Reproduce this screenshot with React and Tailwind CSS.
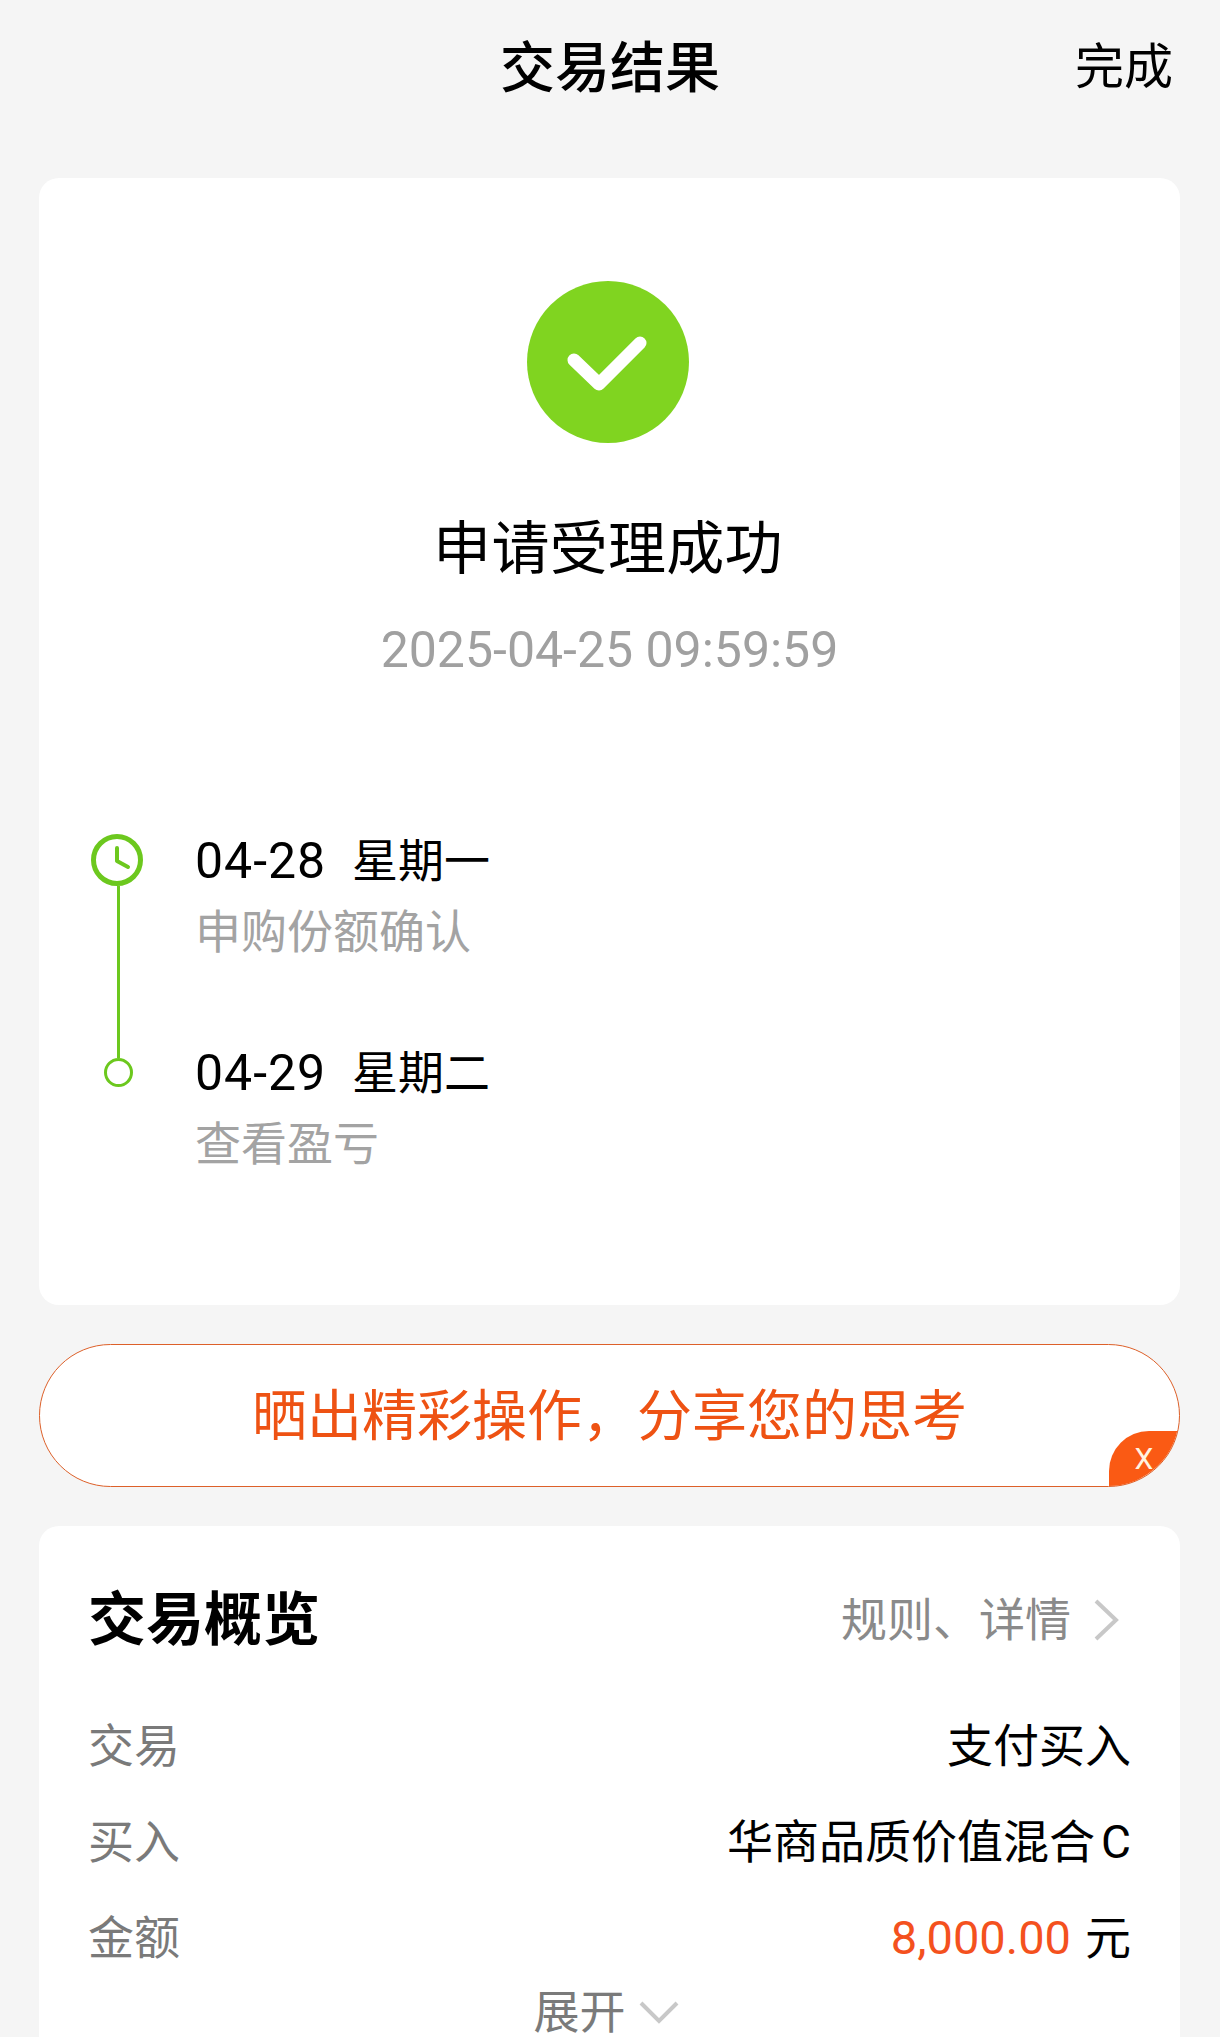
import React from "react";

const font = "font-['Roboto','Noto_Sans_CJK_SC',sans-serif]";

function Step({ date, day, note, icon, last }) {
  return (
    <div className={`flex ${last ? "" : "h-[212px]"}`}>
      <div className="w-[156px] shrink-0 flex flex-col items-center pl-[2px]">
        {icon}
        {!last && <div className="w-[3px] flex-1 -mb-[12px] bg-[#6cc81e]" />}
      </div>
      <div className="mt-[1px]">
        <div className="flex items-center h-[52px] text-[46px] leading-[52px] text-black">
          <span className="w-[157px] text-[50px] tracking-[1px]">{date}</span>
          <span>{day}</span>
        </div>
        <div className="mt-[19px] text-[46px] leading-[52px] text-[#a3a3a3]">{note}</div>
      </div>
    </div>
  );
}

function Row({ label, children }) {
  return (
    <div className="flex items-center justify-between h-[96px] text-[46px]">
      <span className="text-[#7a7a7a]">{label}</span>
      <span className="text-black">{children}</span>
    </div>
  );
}

export default function App() {
  return (
    <div className={`${font} h-[2037px] overflow-hidden bg-[#f5f5f5] pl-[39px] pr-[40px]`}>
      {/* header */}
      <div className="relative h-[178px]">
        <div className="pt-[34px] pl-[1px] text-center text-[55px] leading-[68px] font-medium text-black">交易结果</div>
        <div className="absolute right-[7px] top-[34px] text-[49px] leading-[68px] text-black">完成</div>
      </div>

      {/* result card */}
      <div className="h-[1127px] rounded-[20px] bg-white">
        <div className="flex flex-col items-center pt-[103px] pr-[3px]">
          <svg width="162" height="162" viewBox="0 0 162 162">
            <circle cx="81" cy="81" r="81" fill="#80d420" />
            <path d="M47 79 L72 103 L113 62" fill="none" stroke="#fff" strokeWidth="13" strokeLinecap="round" strokeLinejoin="round" />
          </svg>
          <div className="mt-[68px] text-[58px] tracking-[0.3px] leading-[76px] text-black">申请受理成功</div>
          <div className="mt-[35px] pl-[3px] text-[50px] leading-[56px] text-[#a0a0a0]">2025-04-25 09:59:59</div>
        </div>
        <div className="mt-[156px]">
          <Step
            date="04-28"
            day="星期一"
            note="申购份额确认"
            icon={
              <svg width="52" height="52" viewBox="0 0 52 52" className="shrink-0 -translate-x-[1px]">
                <circle cx="26" cy="26" r="23.5" fill="none" stroke="#6cc81e" strokeWidth="5" />
                <path d="M26 14 V27 L37 33" fill="none" stroke="#6cc81e" strokeWidth="4" strokeLinecap="round" strokeLinejoin="round" />
              </svg>
            }
          />
          <Step
            last
            date="04-29"
            day="星期二"
            note="查看盈亏"
            icon={<div className="mt-[12px] h-[29px] w-[29px] rounded-full border-[3px] border-[#6cc81e] bg-white" />}
          />
        </div>
      </div>

      {/* share banner */}
      <div className="relative mt-[39px] flex h-[143px] items-center justify-center overflow-hidden rounded-full border-[1.5px] border-[#dd6029] bg-white pt-[2px] text-[55px] text-[#ee5213]">
        晒出精彩操作，分享您的思考
        <div className="absolute bottom-0 right-0 flex h-[55px] w-[70px] items-center justify-center rounded-tl-[40px] bg-[#fa5a14] text-[30px] leading-none text-[#fff3e0]">
          X
        </div>
      </div>

      {/* overview card */}
      <div className="mt-[39px] h-[600px] rounded-[20px] bg-white px-[49px]">
        <div className="flex items-center justify-between pt-[58px] pr-[12px]">
          <span className="text-[58px] leading-[72px] font-semibold text-black">交易概览</span>
          <span className="flex items-center gap-[22px] text-[46px] text-[#8a8a8a]">
            规则、详情
            <svg width="26" height="44" viewBox="0 0 26 44">
              <path d="M3 3 L23 22 L3 41" fill="none" stroke="#c8c8c8" strokeWidth="4" />
            </svg>
          </span>
        </div>
        <div className="mt-[42px]">
          <Row label="交易">支付买入</Row>
          <Row label="买入">
            华商品质价值混合<span className="ml-[6px]">C</span>
          </Row>
          <Row label="金额">
            <span className="text-[47px] text-[#f4511e]">8,000.00</span>
            <span className="ml-[14px]">元</span>
          </Row>
        </div>
        <div className="mt-[4px] flex items-center justify-center gap-[12px] pr-[6px] text-[46px] leading-[44px] text-[#7a7a7a]">
          展开
          <svg width="42" height="24" viewBox="0 0 42 24">
            <path d="M3 3 L21 21 L39 3" fill="none" stroke="#c8c8c8" strokeWidth="4" />
          </svg>
        </div>
      </div>
    </div>
  );
}
